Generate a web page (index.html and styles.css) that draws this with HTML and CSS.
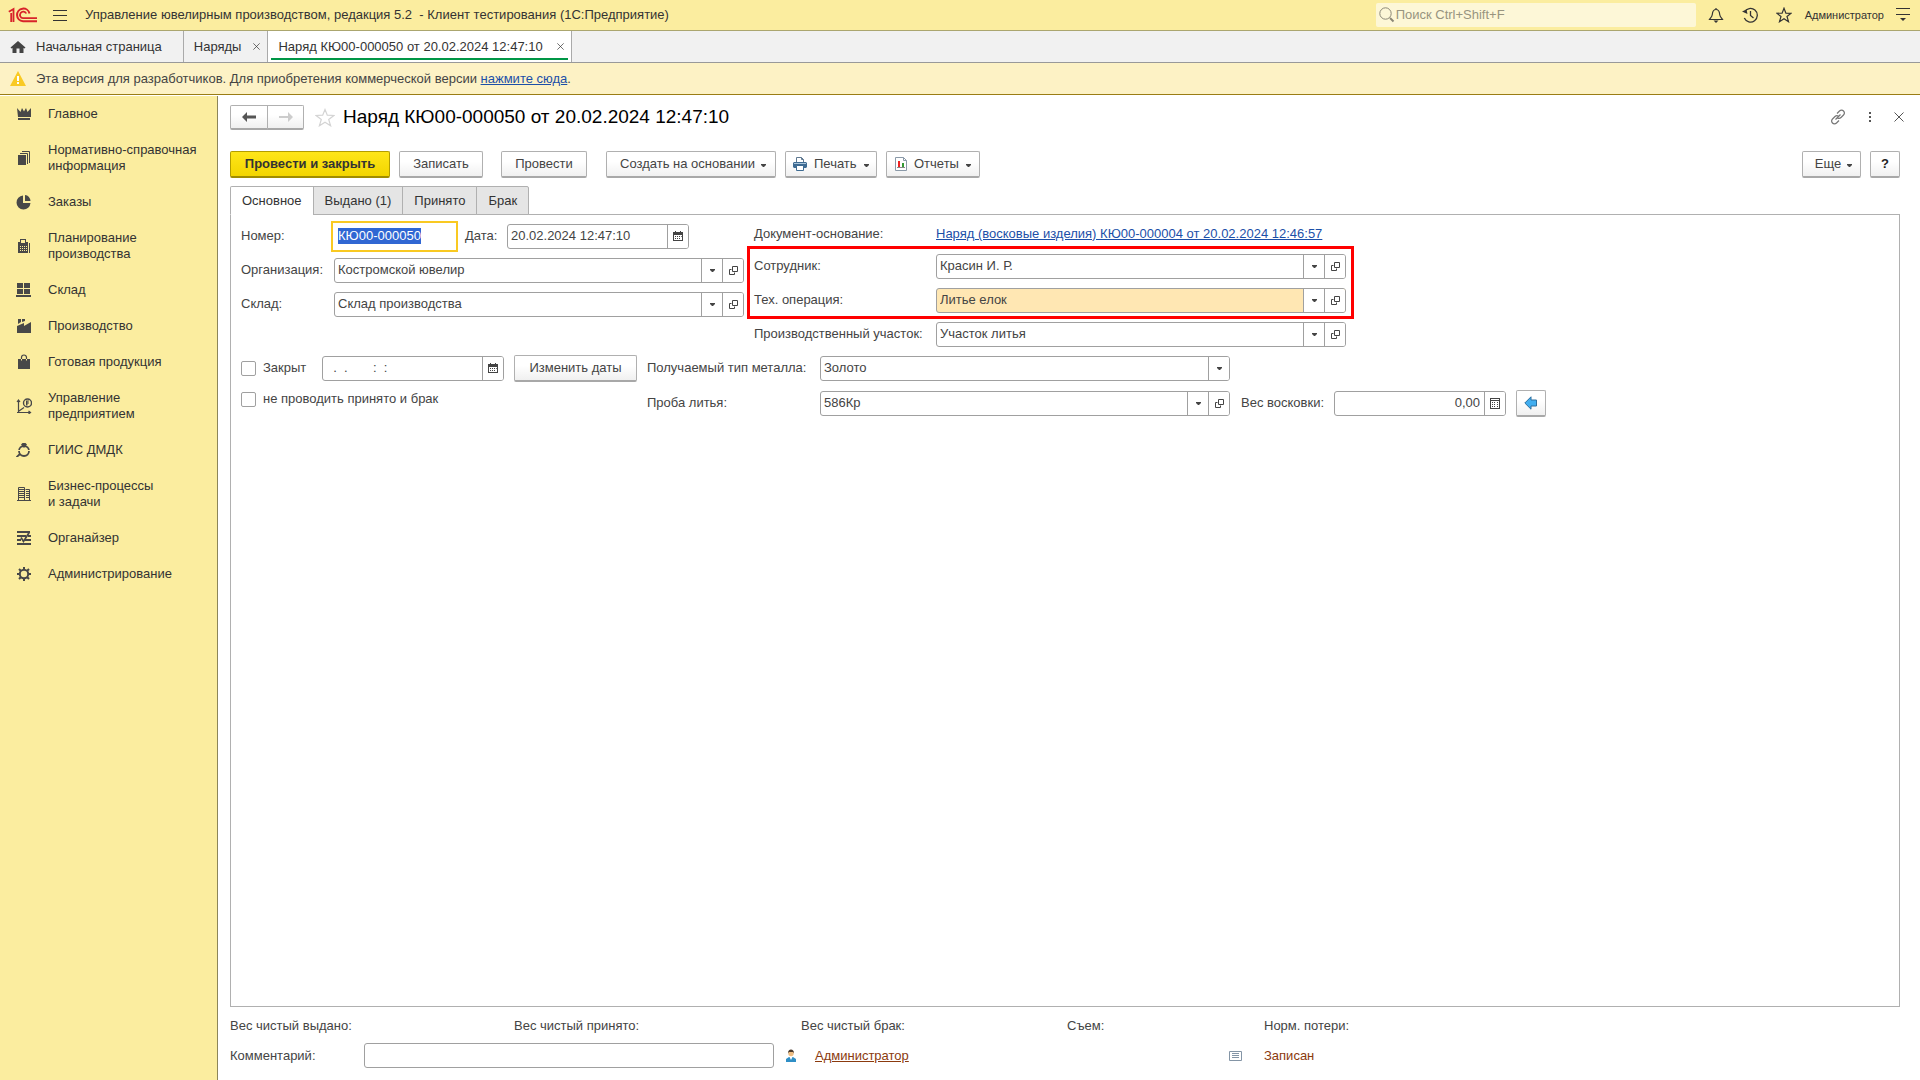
FILE: index.html
```html
<!DOCTYPE html>
<html lang="ru">
<head>
<meta charset="utf-8">
<meta name="viewport" content="width=device-width, initial-scale=1">
<title>Наряд КЮ00-000050 от 20.02.2024 12:47:10</title>
<link rel="stylesheet" href="styles.css">
</head>
<body>
<svg class="sprite" aria-hidden="true">
  <symbol id="i-caret" viewBox="0 0 5 3"><path d="M0 0h5v1L3 3H2L0 1z"/></symbol>
  <symbol id="i-open" viewBox="0 0 9 9"><path fill="none" stroke="currentColor" d="M3.500.5h5v5h-5zM2.500 3.500h-2v5h5v-2"/></symbol>
  <symbol id="i-cal" viewBox="0 0 10 10"><path fill-rule="evenodd" d="M0 1h2V0h1v1h4V0h1v1h2v9H0zM1 4v5h8V4zM2 5h1v1H2zM4 5h1v1H4zM6 5h1v1H6zM2 7h1v1H2zM4 7h1v1H4zM6 7h1v1H6zM8 5h.7v1H8z"/></symbol>
  <symbol id="i-calc" viewBox="0 0 10 11"><path fill-rule="evenodd" d="M0 0h10v11H0zM1 1v1h8V1zM1 3v7h8V3zM2 4h1v1H2zM4 4h1v1H4zM7 4h1v1H7zM2 6h1v1H2zM4 6h1v1H4zM7 6h1v1H7zM2 8h1v1H2zM4 8h1v1H4zM7 8h1v1H7z"/></symbol>
  <symbol id="i-x" viewBox="0 0 10 10"><path fill="none" stroke="currentColor" d="M.5.5l9 9M9.500.5l-9 9"/></symbol>
</svg>

<header class="topbar">
  <svg class="logo" viewBox="0 0 30 16" role="img" aria-label="1С"><g fill="none" stroke="#d8232a" stroke-width="2"><path d="M.8 4.800 5.500 2v13M3.200 6v9" stroke-width="1.800"/><path d="M21.500 6.500A6.300 6.300 0 1 0 15 14.200H29"/><path d="M18.300 6.500A3.300 3.300 0 1 0 15 11.200H29" stroke-width="1.700"/></g></svg>
  <button class="plain menu-btn" aria-label="Меню"><svg width="14" height="11" viewBox="0 0 14 11"><path stroke="#333" d="M0 .5h14M0 5.500h14M0 10.500h14"/></svg></button>
  <span class="app-title">Управление ювелирным производством, редакция 5.2&nbsp; - Клиент тестирования (1С:Предприятие)</span>
  <label class="search">
    <svg width="16" height="16" viewBox="0 0 16 16"><g fill="none" stroke="#8b8776"><circle cx="6.500" cy="6.500" r="5.700"/><path stroke-width="2" d="M11 11l3.500 3.500"/></g></svg>
    <input type="text" placeholder="Поиск Ctrl+Shift+F" aria-label="Поиск">
  </label>
  <button class="plain top-ico" aria-label="Уведомления"><svg width="16" height="16" viewBox="0 0 16 16"><path fill="none" stroke="#333" stroke-width="1.200" d="M8 1v1.500M8 2.500c-3 0-3.500 2.500-3.700 5C4.100 9.500 3 10.500 1.500 12.500h13C13 10.500 11.900 9.500 11.700 7.500 11.500 5 11 2.500 8 2.500z"/><path d="M5.500 13.500h5L8 16z" fill="#333"/></svg></button>
  <button class="plain top-ico" aria-label="История"><svg width="16" height="16" viewBox="0 0 16 16"><path fill="none" stroke="#333" stroke-width="1.300" d="M2.500 5A6.800 6.800 0 1 1 2.300 11M8.500 4v4.500l3 2.500"/><path d="M0 4.500 5.500 7 4.500 2.500z" fill="#333"/></svg></button>
  <button class="plain top-ico" aria-label="Избранное"><svg width="16" height="16" viewBox="0 0 16 16"><path fill="none" stroke="#333" stroke-width="1.200" d="M8 1.200l1.900 4.900 5.200.2-4.100 3.200 1.500 5.200L8 11.700l-4.500 3 1.500-5.200L.9 6.300l5.200-.2z"/></svg></button>
  <a class="user" href="#">Администратор</a>
  <button class="plain" aria-label="Настройки"><svg width="14" height="14" viewBox="0 0 14 14"><path stroke="#333" d="M0 .5h14M0 6.500h14"/><path fill="#333" d="M4 10h6l-3 3z"/></svg></button>
</header>

<nav class="tabs" aria-label="Открытые окна">
  <button class="tab home"><svg width="16" height="12" viewBox="0 0 16 12"><path fill="#444" d="M8 0l7.500 6.500-1 1L13.500 7v5H9.500V7.500h-3V12h-4V7l-1 .5-1-1z"/></svg>Начальная страница</button>
  <button class="tab">Наряды<svg width="7" height="7"><use href="#i-x"/></svg></button>
  <button class="tab current">Наряд КЮ00-000050 от 20.02.2024 12:47:10<svg width="7" height="7"><use href="#i-x"/></svg></button>
</nav>

<div class="notice">
  <svg width="16" height="15" viewBox="0 0 16 15"><path fill="#f9ca24" d="M8 0l8 15H0z"/><path stroke="#fff" stroke-width="2" d="M8 5v5M8 11v2"/></svg>
  <span>Эта версия для разработчиков. Для приобретения коммерческой версии <a href="#">нажмите сюда</a>.</span>
</div>

<div class="body">
<nav class="sidebar" aria-label="Разделы">
  <a href="#"><svg viewBox="0 0 16 16"><path d="M1 2l3.500 4L6 2l2 3.500L10 2l1.500 4L15 2v9H2zM2 12h12v2H2z"/></svg>Главное</a>
  <a href="#"><svg viewBox="0 0 16 16"><path d="M2 5h8v10H2z"/><path fill="none" stroke="currentColor" d="M4 3.500h7.500V14M6 1.500h7.500V13"/></svg>Нормативно-справочная<br>информация</a>
  <a href="#"><svg viewBox="0 0 16 16"><path d="M7 1.500V9h7.500A7 7 0 1 1 7 1.500z"/><path d="M9 1a6 6 0 0 1 5.500 6H9z"/></svg>Заказы</a>
  <a href="#"><svg viewBox="0 0 16 16"><path fill-rule="evenodd" d="M4 1h6v3h2v11H2V4h2zM5 2v3h4V2zM4 8v1h1V8zM6 8v1h1V8zM8 8v1h1V8zM10 8v1h1V8zM4 10v1h1v-1zM6 10v1h1v-1zM8 10v1h1v-1zM10 10v1h1v-1zM4 12v1h1v-1zM6 12v1h1v-1zM8 12v1h1v-1zM10 12v1h1v-1zM13 5h1v10h-1z"/></svg>Планирование<br>производства</a>
  <a href="#"><svg viewBox="0 0 16 16"><path d="M1 1h6v5H1zM8 1h6v5H8zM1 7h6v5H1zM8 7h6v5H8zM0 13h15v2H0z"/></svg>Склад</a>
  <a href="#"><svg viewBox="0 0 16 16"><path d="M2 1h3v3L2 6zM6 1h3v2L6 4zM1 8l7-3v3l7-4v11H1z"/></svg>Производство</a>
  <a href="#"><svg viewBox="0 0 16 16"><path d="M2 5h12v10H2z"/><path fill="none" stroke="currentColor" stroke-width="1.200" d="M5.500 5V3.500a2.500 2.500 0 0 1 5 0V5"/><path fill="none" stroke="#fbed9f" d="M5.500 5v1.500M10.500 5v1.500"/></svg>Готовая продукция</a>
  <a href="#"><svg viewBox="0 0 16 16"><path fill="none" stroke="currentColor" stroke-width="1.200" d="M2.500 2v12.500M1 14.500h13M3 13l5-3.500M1 4l1.500-2L4 4M12.500 13l2 1.500-2 1.500"/><circle cx="11.500" cy="5" r="4" fill="none" stroke="currentColor" stroke-width="1.400"/><path d="M10 2.500h3v1h-1.500v1H13v1h-1.500v2H10z"/></svg>Управление<br>предприятием</a>
  <a href="#"><svg viewBox="0 0 16 16"><circle cx="8" cy="9" r="5" fill="none" stroke="currentColor" stroke-width="1.800"/><path d="M5 2.500 6.500 1h3L11 2.500 8 6zM0 14.500l3.500-3.500 1.500 1.500-3 2.500H0z"/><path stroke="#fbed9f" d="M2 8.500h2M12 8.500h2"/></svg>ГИИС ДМДК</a>
  <a href="#"><svg viewBox="0 0 16 16"><path d="M1 14h14v1H1z"/><path fill="none" stroke="currentColor" d="M2.500 14V1.500h6V14M9.500 3.500h4V14M3 3.500h5M3 5.500h5M3 7.500h5M3 9.500h5M3 11.500h5M10 5.500h3M10 7.500h3M10 9.500h3M10 11.500h3"/></svg>Бизнес-процессы<br>и задачи</a>
  <a href="#"><svg viewBox="0 0 16 16"><path fill="none" stroke="currentColor" stroke-width="2" d="M1 2h13M1 6h9M12 6h3M1 10h4M9 10h6M1 14h14"/><path fill="none" stroke="currentColor" stroke-width="1.700" d="M5 7.500l2.500 4L13.500 2"/></svg>Органайзер</a>
  <a href="#"><svg viewBox="0 0 16 16"><circle cx="8" cy="8" r="4.200" fill="none" stroke="currentColor" stroke-width="2"/><path stroke="currentColor" stroke-width="2" d="M8 1v3M8 12v3M1 8h3M12 8h3M3 3l2 2M11 11l2 2M13 3l-2 2M5 11l-2 2"/></svg>Администрирование</a>
</nav>

<main class="main">
  <div class="title-row">
    <div class="nav-pair">
      <button class="btn" aria-label="Назад"><svg width="14" height="10" viewBox="0 0 14 10"><path fill="#555" d="M0 5l5-5v3.500h9v3H5V10z"/></svg></button>
      <button class="btn" aria-label="Вперед"><svg width="14" height="10" viewBox="0 0 14 10"><path fill="#ccc" d="M14 5L9 0v4H0v2h9v4z"/></svg></button>
    </div>
    <button class="plain fav" aria-label="В избранное"><svg width="20" height="19" viewBox="0 0 20 19"><path fill="none" stroke="#d4d4d4" stroke-width="1.200" d="M10 1.500l2.300 5.700 6.600.3-5.200 4 1.900 6.300L10 14.300l-5.600 3.500 1.900-6.300-5.200-4 6.600-.3z"/></svg></button>
    <h1>Наряд КЮ00-000050 от 20.02.2024 12:47:10</h1>
    <div class="win-tools">
      <button class="plain" aria-label="Ссылка"><svg width="16" height="16" viewBox="0 0 16 16"><g fill="none" stroke="#777" stroke-width="1.200"><path d="M7 4.500l2.500-2.500c1.200-1.200 3-1.200 4 0s1.200 2.800 0 4L11 8.500c-1 1-2.500 1-3.300.5M9 11.500L6.500 14c-1.200 1.200-3 1.200-4 0s-1.200-2.800 0-4L5 7.500C6 6.500 7.500 6.500 8.300 7M5.500 10.500l5-5"/></g></svg></button>
      <button class="plain" aria-label="Дополнительно"><svg width="4" height="11" viewBox="0 0 4 11"><path fill="#555" d="M1 0h2v2H1zM1 4h2v2H1zM1 8h2v2H1z"/></svg></button>
      <button class="plain" aria-label="Закрыть"><svg width="10" height="10"><use href="#i-x"/></svg></button>
    </div>
  </div>

  <div class="toolbar">
    <button class="btn primary">Провести и закрыть</button>
    <button class="btn write">Записать</button>
    <button class="btn post">Провести</button>
    <button class="btn create">Создать на основании<svg class="caret"><use href="#i-caret"/></svg></button>
    <button class="btn pic"><svg width="14" height="14" viewBox="0 0 14 14"><path fill="#fff" stroke="#5f7890" d="M3.500 6V.5h5l2 2V6M8.500.5v2h2"/><path fill="#3e6b92" d="M1 5h12l1 1v4l-1 1H1l-1-1V6z"/><path fill="#a9c4da" d="M1 6h12v1H1z"/><path fill="#fff" stroke="#3e6b92" d="M3.500 8.500h7v5h-7z"/></svg>Печать<svg class="caret"><use href="#i-caret"/></svg></button>
    <button class="btn pic reports"><svg width="12" height="14" viewBox="0 0 12 14"><path fill="#fff" stroke="#8a99a8" d="M.5.5h8l3 3v10H.5zM8.500.5v3h3"/><path fill="#e22" d="M3 4h2v6H3z"/><path fill="#393" d="M7 6h2v4H7z"/><path stroke="#888" d="M2 10.500h8"/></svg>Отчеты<svg class="caret"><use href="#i-caret"/></svg></button>
    <button class="btn more">Еще<svg class="caret"><use href="#i-caret"/></svg></button>
    <button class="btn help">?</button>
  </div>

  <div class="pages" role="tablist">
    <button role="tab" aria-selected="true">Основное</button>
    <button role="tab" aria-selected="false">Выдано (1)</button>
    <button role="tab" aria-selected="false">Принято</button>
    <button role="tab" aria-selected="false">Брак</button>
  </div>

  <section class="panel">
    <div class="upper">
      <div class="col-left">
        <div class="row">
          <label class="lbl" for="num">Номер:</label>
          <div class="field focus"><input id="num" type="text" value="КЮ00-000050" autofocus></div>
          <label class="date-lbl" for="date">Дата:</label>
          <div class="field date"><input id="date" type="text" value="20.02.2024 12:47:10"><button aria-label="Календарь"><svg width="10" height="10"><use href="#i-cal"/></svg></button></div>
        </div>
        <div class="row">
          <label class="lbl" for="org">Организация:</label>
          <div class="field"><input id="org" type="text" value="Костромской ювелир"><button aria-label="Выбрать"><svg class="dd"><use href="#i-caret"/></svg></button><button aria-label="Открыть"><svg width="9" height="9"><use href="#i-open"/></svg></button></div>
        </div>
        <div class="row">
          <label class="lbl" for="store">Склад:</label>
          <div class="field"><input id="store" type="text" value="Склад производства"><button aria-label="Выбрать"><svg class="dd"><use href="#i-caret"/></svg></button><button aria-label="Открыть"><svg width="9" height="9"><use href="#i-open"/></svg></button></div>
        </div>
      </div>
      <div class="col-right">
        <div class="row base">
          <span class="lbl">Документ-основание:</span>
          <a href="#">Наряд (восковые изделия) КЮ00-000004 от 20.02.2024 12:46:57</a>
        </div>
        <div class="marked">
          <div class="row">
            <label class="lbl" for="emp">Сотрудник:</label>
            <div class="field"><input id="emp" type="text" value="Красин И. Р."><button aria-label="Выбрать"><svg class="dd"><use href="#i-caret"/></svg></button><button aria-label="Открыть"><svg width="9" height="9"><use href="#i-open"/></svg></button></div>
          </div>
          <div class="row">
            <label class="lbl" for="op">Тех. операция:</label>
            <div class="field tinted"><input id="op" type="text" value="Литье елок"><button aria-label="Выбрать"><svg class="dd"><use href="#i-caret"/></svg></button><button aria-label="Открыть"><svg width="9" height="9"><use href="#i-open"/></svg></button></div>
          </div>
        </div>
        <div class="row">
          <label class="lbl" for="site">Производственный участок:</label>
          <div class="field"><input id="site" type="text" value="Участок литья"><button aria-label="Выбрать"><svg class="dd"><use href="#i-caret"/></svg></button><button aria-label="Открыть"><svg width="9" height="9"><use href="#i-open"/></svg></button></div>
        </div>
      </div>
    </div>

    <div class="lower">
      <div class="closing">
        <div class="row">
          <label class="check closed"><input type="checkbox">Закрыт</label>
          <div class="field date"><input class="mask" type="text" value="  .  .       :  :" aria-label="Дата закрытия"><button aria-label="Календарь"><svg width="10" height="10"><use href="#i-cal"/></svg></button></div>
          <button class="btn dates">Изменить даты</button>
        </div>
        <label class="check"><input type="checkbox">не проводить принято и брак</label>
      </div>
      <div class="metal">
        <div class="row">
          <label class="lbl" for="metal">Получаемый тип металла:</label>
          <div class="field"><input id="metal" type="text" value="Золото"><button aria-label="Выбрать"><svg class="dd"><use href="#i-caret"/></svg></button></div>
        </div>
        <div class="row">
          <label class="lbl" for="probe">Проба литья:</label>
          <div class="field"><input id="probe" type="text" value="586Кр"><button aria-label="Выбрать"><svg class="dd"><use href="#i-caret"/></svg></button><button aria-label="Открыть"><svg width="9" height="9"><use href="#i-open"/></svg></button></div>
          <label class="wax-lbl" for="wax">Вес восковки:</label>
          <div class="field wax"><input id="wax" type="text" value="0,00"><button aria-label="Калькулятор"><svg width="10" height="11"><use href="#i-calc"/></svg></button></div>
          <button class="btn fill" aria-label="Заполнить"><svg width="14" height="14" viewBox="0 0 14 14"><path fill="#41aef0" stroke="#2c6f9e" d="M.8 7L7 .8V4h5.500v6H7v3.200z"/></svg></button>
        </div>
      </div>
    </div>
  </section>

  <footer class="footer">
    <div class="totals">
      <span>Вес чистый выдано:</span><span>Вес чистый принято:</span><span>Вес чистый брак:</span><span>Съем:</span><span>Норм. потери:</span>
    </div>
    <div class="comment">
      <label for="comment">Комментарий:</label>
      <div class="field"><input id="comment" type="text"></div>
      <svg width="12" height="14" viewBox="0 0 12 14"><path fill="#2f8fc6" d="M1 13v-3l3-2h4l3 2v3z"/><path fill="#fff" d="M4.500 8h3L6 11z"/><circle cx="6" cy="4.500" r="2.700" fill="#eebd83"/><path fill="#4a3a2c" d="M3 4.500C3 1.500 4.300.5 6 .5s3 1 3 4L8 3H4z"/></svg>
      <a class="author" href="#">Администратор</a>
      <svg width="14" height="12" viewBox="0 0 14 12"><path fill="#fff" stroke="#8495a6" d="M.5 1.500h12v9H.5zM3 3.500h7M3 5.500h7M3 7.500h7"/></svg>
      <span class="state">Записан</span>
    </div>
  </footer>
</main>
</div>
<script src="script.js"></script>
</body>
</html>
```
FILE: styles.css
```css
* { box-sizing: border-box; }
body {
  margin: 0;
  min-height: 100vh;
  display: flex;
  flex-direction: column;
  font: 13px/16px Arial, "Liberation Sans", sans-serif;
  color: #444;
  background: #fff;
}
button, input { font: inherit; color: inherit; margin: 0; }
a { color: #1c4fa8; }
svg { flex: none; fill: currentColor; }
.sprite { display: none; }
.plain { border: 0; padding: 0; background: none; display: flex; align-items: center; justify-content: center; }

/* Application header */
.topbar {
  height: 31px;
  display: flex;
  align-items: center;
  padding: 0 10px 0 8px;
  background: #fbed9f;
  border-bottom: 1px solid #aba66f;
  color: #333;
}
.logo { width: 30px; height: 16px; }
.menu-btn { margin: 0 18px 0 15px; }
.app-title { flex: 1; white-space: nowrap; }
.search {
  display: flex;
  align-items: center;
  gap: 1px;
  width: 320px;
  height: 24px;
  padding-left: 3px;
  margin-right: 11px;
  background: #fdf7d7;
  border-radius: 2px;
}
.search input { flex: 1; min-width: 0; border: 0; padding: 0; background: none; outline: 0; }
.search input::placeholder { color: #98947f; opacity: 1; }
.top-ico { width: 18px; margin-right: 16px; }
.user { margin: 0 12px 0 -4px; font-size: 11px; color: #333; text-decoration: none; }

/* Window tabs */
.tabs { display: flex; height: 32px; background: #f1f1f1; border-bottom: 1px solid #999; }
.tab {
  display: flex;
  align-items: center;
  gap: 12px;
  padding: 0 7px 0 10px;
  border: 0;
  border-right: 1px solid #aaa;
  background: none;
  white-space: nowrap;
  color: #333;
}
.home { gap: 10px; padding-right: 21px; }
.current { gap: 14px; background: linear-gradient(#009646, #009646) 50% 27px / calc(100% - 6px) 2px no-repeat #fff; }

.notice {
  display: flex;
  align-items: center;
  gap: 10px;
  height: 32px;
  padding-left: 10px;
  background: #fdf2c5;
  border-bottom: 1px solid #9a7d14;
}

/* Work area */
.body { flex: 1; display: flex; padding-top: 1px; }
.sidebar { flex: none; width: 218px; background: #fbed9f; border-right: 1px solid #8c8559; }
.sidebar a {
  display: grid;
  grid-template-columns: 16px 1fr;
  align-items: center;
  gap: 16px;
  padding: 10px 0 10px 16px;
  color: #333;
  text-decoration: none;
}
.sidebar svg { width: 16px; height: 16px; color: #484848; }
.main { flex: 1; min-width: 0; display: flex; flex-direction: column; padding: 8px 20px 12px 12px; }

.btn {
  display: flex;
  align-items: center;
  justify-content: center;
  height: 27px;
  padding: 0 12px;
  border: 1px solid #b0b0b0;
  border-bottom: 2px solid #a8a8a8;
  border-radius: 2px;
  background: linear-gradient(#fff 40%, #f0f0f0);
  white-space: nowrap;
}
.caret { width: 5px; height: 3px; margin: 3px -4px 0 6px; }
.dd { width: 5px; height: 3px; }

.title-row { display: flex; align-items: center; height: 26px; }
.nav-pair { display: flex; }
.nav-pair .btn { width: 38px; height: 25px; }
.nav-pair .btn:first-child { border-radius: 2px 0 0 2px; }
.nav-pair .btn:last-child { width: 37px; margin-left: -1px; border-radius: 0 2px 2px 0; }
.fav { margin: 0 8px 0 11px; }
h1 { margin: 0; font-size: 19px; line-height: 22px; font-weight: normal; color: #000; }
.win-tools { display: flex; gap: 22px; margin: 0 -4px 0 auto; color: #555; }

.toolbar { display: flex; margin: 21px 0 8px; }
.primary { width: 160px; font-weight: bold; color: #333; border-color: #b39d00; border-bottom-color: #a08c00; background: linear-gradient(#ffe619, #f3d500); }
.write { width: 84px; margin: 0 18px 0 9px; }
.post { width: 86px; }
.create { width: 170px; margin: 0 9px 0 19px; }
.pic { width: 92px; gap: 7px; padding: 0 8px 0 7px; justify-content: flex-start; }
.pic .caret { margin: 3px 0 0 0; }
.reports { width: 94px; margin-left: 9px; padding-left: 8px; }
.more { width: 59px; margin: 0 9px 0 auto; }
.help { width: 30px; font-weight: bold; color: #222; }

/* Form pages */
.pages { display: flex; margin-bottom: -1px; }
.pages button {
  position: relative;
  height: 29px;
  padding: 0 11px;
  margin-right: -1px;
  border: 1px solid #b0b0b0;
  background: #e5e5e5;
  color: #333;
  border-radius: 0;
}
.pages button:first-child { border-radius: 2px 0 0 0; }
.pages button:last-child { border-radius: 0 2px 0 0; }
.pages [aria-selected="true"] { background: #fff; border-bottom-color: #fff; }
.panel { flex: 1; padding: 4px 10px; border: 1px solid #b0b0b0; }

.row { display: flex; align-items: center; height: 34px; }
.lbl { flex: none; white-space: nowrap; }
.field {
  display: flex;
  width: 410px;
  height: 25px;
  border: 1px solid #a0a0a0;
  border-radius: 3px;
  background: #fff;
  overflow: hidden;
}
.field input { flex: 1; min-width: 0; border: 0; padding: 0 4px 0 3px; background: none; outline: 0; }
.field button {
  display: flex;
  align-items: center;
  justify-content: center;
  width: 21px;
  padding: 0;
  border: 0;
  border-left: 1px solid #a0a0a0;
  background: #fff;
}
.field.date { width: 182px; }
.field.tinted { background: #ffe7b3; }
.focus { width: 127px; height: 31px; margin: 0 7px 0 -3px; border: 2px solid #f9c922; border-radius: 0; }
.focus input { padding-left: 5px; }
::selection { background: #3067d3; color: #fff; }

.upper { display: flex; gap: 10px; }
.col-left .lbl { width: 93px; }
.date-lbl { width: 42px; }
.col-right .lbl { width: 182px; }
.base { height: 30px; }
.marked { position: relative; }
.marked::after {
  content: "";
  position: absolute;
  inset: -3px -8px -2px -7px;
  border: 3px solid #f00;
  pointer-events: none;
}

.lower { display: flex; gap: 10px; }
.check { display: flex; align-items: center; gap: 7px; white-space: nowrap; }
.check input { appearance: none; width: 15px; height: 15px; border: 1px solid #a0a0a0; border-radius: 2px; background: #fff; }
.closed { width: 81px; }
.closing > .check { margin-top: 6px; }
.mask { white-space: pre; }
.dates { width: 123px; margin-left: 10px; }
.metal .lbl { width: 173px; }
.metal .row + .row { margin-top: 1px; }
.wax-lbl { margin: 0 10px 0 11px; white-space: nowrap; }
.wax.field { width: 172px; }
.wax input { text-align: right; }
.fill { width: 30px; padding: 0; margin-left: 10px; }

/* Form footer */
.totals { display: grid; grid-template-columns: 284px 287px 266px 197px auto; padding: 11px 0 9px; }
.comment { display: flex; align-items: center; }
.comment label { width: 134px; }
.comment .field { margin-right: 11px; }
.author { width: 414px; margin-left: 18px; color: #8b3a0e; }
.state { margin-left: 21px; color: #8b3a0e; }
```
FILE: script.js
```js
const num = document.getElementById("num");
num.focus();
num.select();
```
